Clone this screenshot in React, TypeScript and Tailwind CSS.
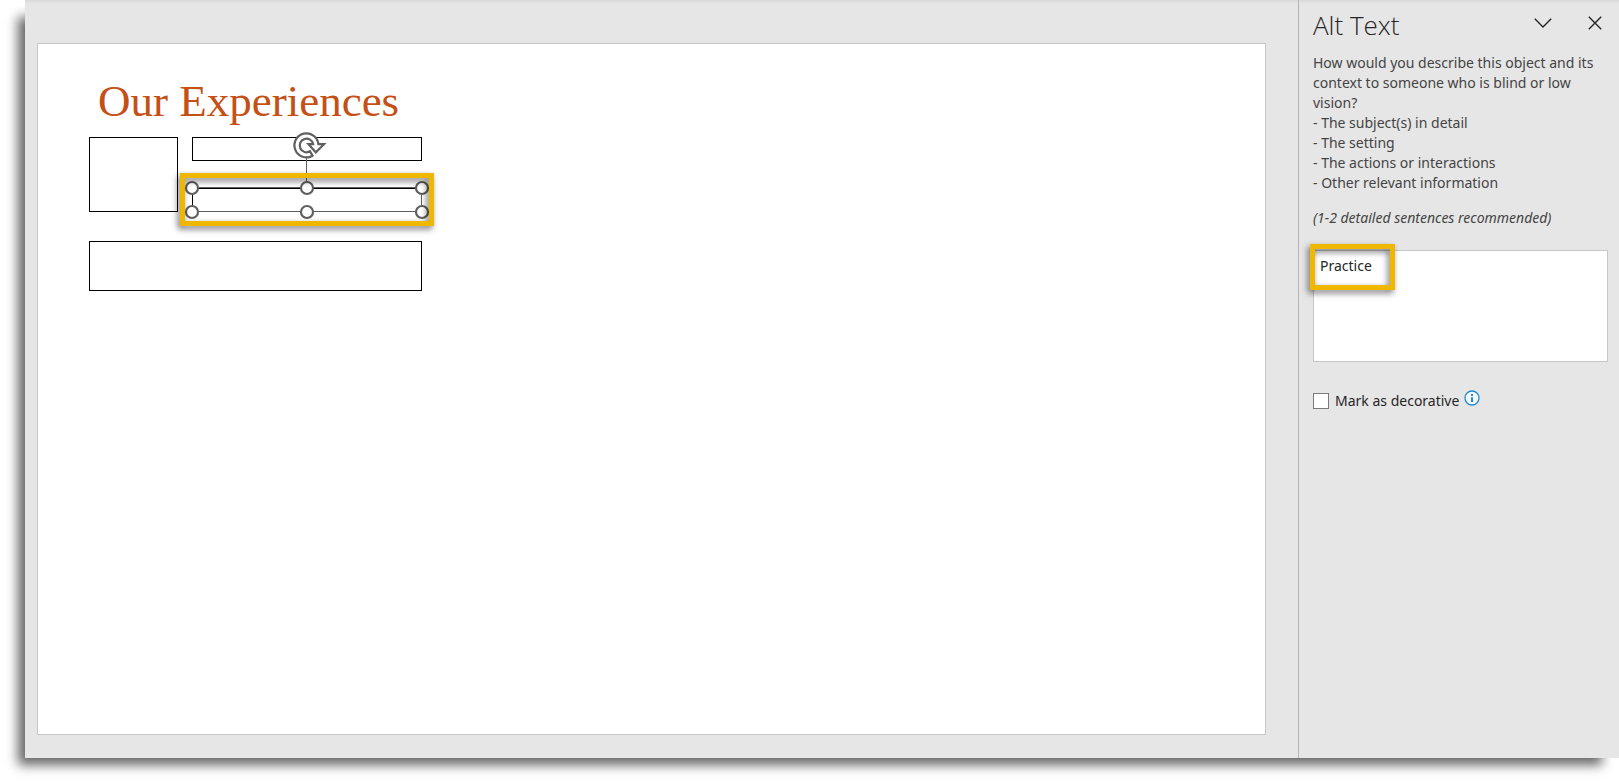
import React, { useState } from "react";

const HIGHLIGHT =
  "pointer-events-none absolute border-[5px] border-[#efb700] drop-shadow-[-2px_3px_3px_rgba(0,0,0,0.55)]";

const HANDLES = [
  [13, 57],
  [128, 57],
  [243, 57],
  [13, 81],
  [128, 81],
  [243, 81],
];

function Selection() {
  return (
    <svg
      className="absolute left-[141px] top-[87px]"
      width="256"
      height="96"
      viewBox="0 0 256 96"
      fill="none"
      aria-hidden="true"
    >
      <path d="M127.500 26V52" stroke="#5f5f5f" />
      <path d="M13 80.500H242.500V57" stroke="#5f5f5f" />
      <path d="M13.500 81V57.500H243" stroke="#000" />
      <path d="M13 56.500H243" stroke="#5f5f5f" />
      <path
        d="M145 13.200H139.400A12 12 0 1 0 133.500 24.700L131 20.300A6.800 6.800 0 1 1 134.200 13.200H129.500L136.800 21.300Z"
        fill="#fff"
        stroke="#5f5f5f"
        strokeWidth="2.200"
      />
      {HANDLES.map(([x, y]) => (
        <circle key={`${x}-${y}`} cx={x} cy={y} r="6" fill="#fff" stroke="#5f5f5f" strokeWidth="2.200" />
      ))}
    </svg>
  );
}

function Slide() {
  return (
    <section className="relative flex-1 border border-[#c6c6c6] bg-white" aria-label="Slide">
      <h1 className="absolute left-[60px] top-[32px] whitespace-nowrap font-['Palatino_Linotype','Liberation_Serif',serif] text-[45px] leading-[50px] text-[#c55015]">
        Our Experiences
      </h1>
      <div className="absolute left-[51px] top-[93px] h-[75px] w-[89px] border border-black" />
      <div className="absolute left-[154px] top-[93px] h-[24px] w-[230px] border border-black" />
      <div className="absolute left-[51px] top-[197px] h-[50px] w-[333px] border border-black" />
      <Selection />
      <div className={`${HIGHLIGHT} left-[142px] top-[129px] h-[53px] w-[254px]`} />
    </section>
  );
}

function AltTextPane() {
  const [text, setText] = useState("Practice");
  return (
    <aside className="flex w-[321px] shrink-0 flex-col border-l border-[#b5b5b5] pl-[14px] pr-[11px] text-[14px] leading-5 text-[#444]">
      <header className="flex h-[53px] items-start justify-between pt-2">
        <h2 className="font-['Segoe_UI','Open_Sans',sans-serif] text-[26px] font-light leading-[34px] text-[#262626]">
          Alt Text
        </h2>
        <div className="flex gap-[28px] pr-px pt-[3px]">
          <button type="button" aria-label="Pane options" className="flex size-6 items-center justify-center">
            <svg width="18" height="10" viewBox="0 0 18 10" fill="none" stroke="#262626" strokeWidth="1.400">
              <path d="M.8.8 9 9 17.200.8" />
            </svg>
          </button>
          <button type="button" aria-label="Close" className="flex size-6 items-center justify-center">
            <svg width="14" height="14" viewBox="0 0 14 14" fill="none" stroke="#262626" strokeWidth="1.400">
              <path d="M.8.8 13.200 13.200M13.200.8.8 13.200" />
            </svg>
          </button>
        </div>
      </header>
      <label htmlFor="alt-text">
        How would you describe this object and its context to someone who is blind or low vision?
      </label>
      <ul>
        <li>- The subject(s) in detail</li>
        <li>- The setting</li>
        <li>- The actions or interactions</li>
        <li>- Other relevant information</li>
      </ul>
      <p className="mt-[15px] italic">(1-2 detailed sentences recommended)</p>
      <div className="relative mt-[22px]">
        <textarea
          id="alt-text"
          value={text}
          onChange={(e) => setText(e.target.value)}
          className="block h-[112px] w-full resize-none border border-[#c6c6c6] bg-white px-[6px] py-[5px] text-[#262626] outline-none"
        />
        <div className={`${HIGHLIGHT} -left-[3px] -top-[6px] h-[46px] w-[85px]`} />
      </div>
      <div className="mt-[28px] flex items-center text-[#262626]">
        <input
          id="decorative"
          type="checkbox"
          className="size-4 appearance-none border border-[#7a7a7a] bg-white checked:bg-[#1e8bcd]"
        />
        <label htmlFor="decorative" className="pl-[6px]">
          Mark as decorative
        </label>
        <button type="button" aria-label="About decorative objects" className="mb-[6px] ml-[5px]">
          <svg width="16" height="16" viewBox="0 0 16 16" fill="none">
            <circle cx="8" cy="8" r="7" fill="#f4fafd" stroke="#1e8bcd" strokeWidth="1.300" />
            <path d="M8 4V6M8 7.200V12" stroke="#1e8bcd" strokeWidth="2" />
          </svg>
        </button>
      </div>
    </aside>
  );
}

export default function App() {
  return (
    <div className="flex h-screen flex-col overflow-hidden bg-white pb-[25px] pl-[25px] font-['Segoe_UI','Noto_Sans',sans-serif]">
      <div className="flex flex-1 bg-[#e6e6e6] bg-linear-to-b from-[#dadada] to-[#e6e6e6] to-[4px] shadow-[-12px_12px_11px_-5px_rgba(0,0,0,0.6)]">
        <main className="flex flex-1 pb-[23px] pl-3 pr-8 pt-[43px]">
          <Slide />
        </main>
        <AltTextPane />
      </div>
    </div>
  );
}
